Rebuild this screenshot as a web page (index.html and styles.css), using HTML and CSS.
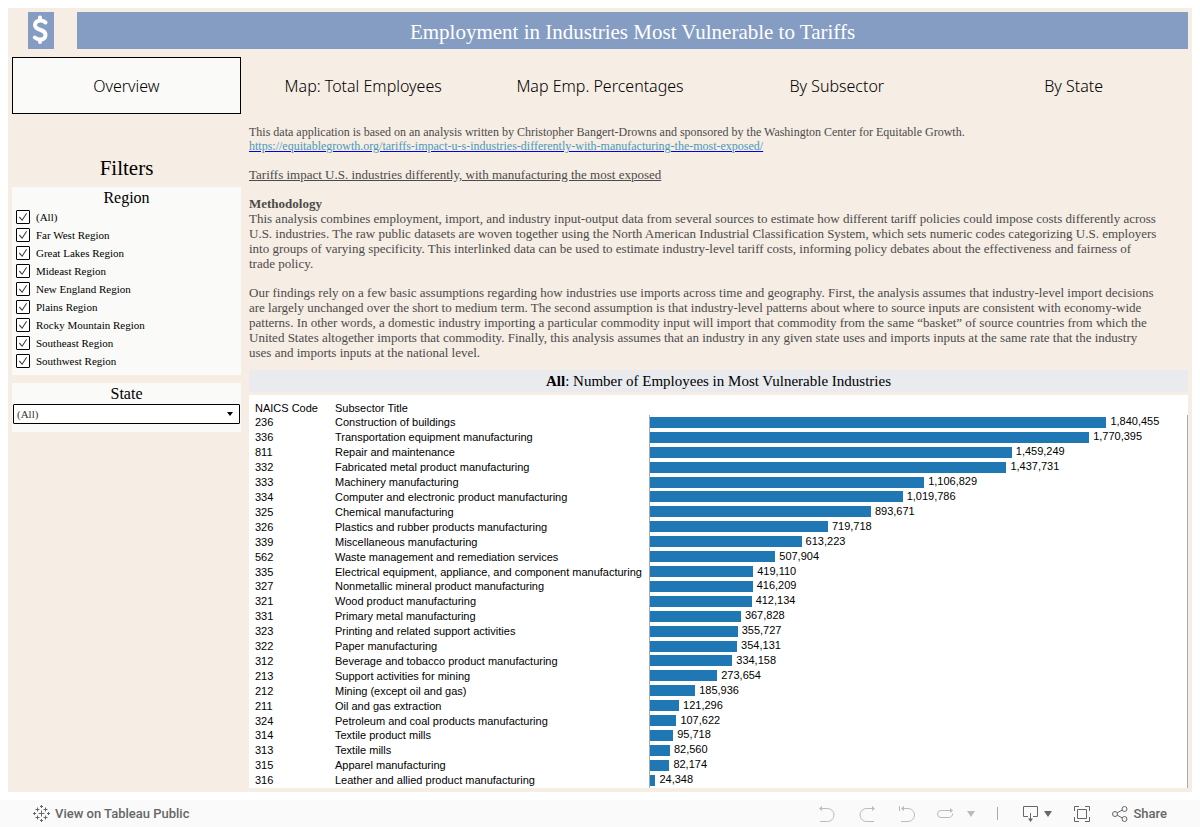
FILE: index.html
```html
<!DOCTYPE html>
<html lang="en">
<head>
    <meta charset="UTF-8">
    <meta name="viewport" content="width=device-width, initial-scale=1.0">
    <title>Employment in Industries Most Vulnerable to Tariffs</title>
    <link rel="stylesheet" href="styles.css">
</head>
<body>
    <div class="dashboard">
        <header class="header">
            <div class="logo">
                <svg width="26" height="37" viewBox="0 0 26 37" fill="none" stroke="#fff" stroke-width="4" stroke-linecap="round" stroke-linejoin="round">
                    <path d="M17.500 10.500C16 9 14.500 8.500 12.500 8.500C9.500 8.500 7 10 7 13C7 19.500 17.500 16 17.500 23C17.500 26 15.200 27.500 12.300 27.500C9.800 27.500 8 26.500 6.800 25.500M12 5.500V8M12 28V30"/>
                </svg>
            </div>
            <h1>Employment in Industries Most Vulnerable to Tariffs</h1>
        </header>

        <nav class="tabs">
            <button class="active">Overview</button>
            <button>Map: Total Employees</button>
            <button>Map Emp. Percentages</button>
            <button>By Subsector</button>
            <button>By State</button>
        </nav>

        <div class="content">
            <aside class="sidebar">
                <h2>Filters</h2>
                <div class="card region">
                    <h3>Region</h3>
                    <label><input type="checkbox" checked>(All)</label>
                    <label><input type="checkbox" checked>Far West Region</label>
                    <label><input type="checkbox" checked>Great Lakes Region</label>
                    <label><input type="checkbox" checked>Mideast Region</label>
                    <label><input type="checkbox" checked>New England Region</label>
                    <label><input type="checkbox" checked>Plains Region</label>
                    <label><input type="checkbox" checked>Rocky Mountain Region</label>
                    <label><input type="checkbox" checked>Southeast Region</label>
                    <label><input type="checkbox" checked>Southwest Region</label>
                </div>
                <div class="card state">
                    <h3><label for="stateSelect">State</label></h3>
                    <select id="stateSelect">
                        <option>(All)</option>
                    </select>
                </div>
            </aside>

            <main class="main">
                <div class="intro">
                    <p class="source">This data application is based on an analysis written by Christopher Bangert-Drowns and sponsored by the Washington Center for Equitable Growth.<br>
                    <a href="https://equitablegrowth.org/tariffs-impact-u-s-industries-differently-with-manufacturing-the-most-exposed/">https://equitablegrowth.org/tariffs-impact-u-s-industries-differently-with-manufacturing-the-most-exposed/</a></p>
                    <p><u>Tariffs impact U.S. industries differently, with manufacturing the most exposed</u></p>
                    <p><strong>Methodology</strong><br>
                    This analysis combines employment, import, and industry input-output data from several sources to estimate how different tariff policies could impose costs differently across<br>
                    U.S. industries. The raw public datasets are woven together using the North American Industrial Classification System, which sets numeric codes categorizing U.S. employers<br>
                    into groups of varying specificity. This interlinked data can be used to estimate industry-level tariff costs, informing policy debates about the effectiveness and fairness of<br>
                    trade policy.</p>
                    <p>Our findings rely on a few basic assumptions regarding how industries use imports across time and geography. First, the analysis assumes that industry-level import decisions<br>
                    are largely unchanged over the short to medium term. The second assumption is that industry-level patterns about where to source inputs are consistent with economy-wide<br>
                    patterns. In other words, a domestic industry importing a particular commodity input will import that commodity from the same “basket” of source countries from which the<br>
                    United States altogether imports that commodity. Finally, this analysis assumes that an industry in any given state uses and imports inputs at the same rate that the industry<br>
                    uses and imports inputs at the national level.</p>
                </div>

                <h2 class="chart-title"><strong>All</strong>: Number of Employees in Most Vulnerable Industries</h2>
                <table class="chart">
                    <thead>
                        <tr><th class="code">NAICS Code</th><th class="name">Subsector Title</th><th></th></tr>
                    </thead>
                    <tbody>
                        <tr><td>236</td><td>Construction of buildings</td><td><div class="bar-row"><span class="bar" style="width: 85%"></span><span class="value">1,840,455</span></div></td></tr>
                        <tr><td>336</td><td>Transportation equipment manufacturing</td><td><div class="bar-row"><span class="bar" style="width: 81.8%"></span><span class="value">1,770,395</span></div></td></tr>
                        <tr><td>811</td><td>Repair and maintenance</td><td><div class="bar-row"><span class="bar" style="width: 67.4%"></span><span class="value">1,459,249</span></div></td></tr>
                        <tr><td>332</td><td>Fabricated metal product manufacturing</td><td><div class="bar-row"><span class="bar" style="width: 66.4%"></span><span class="value">1,437,731</span></div></td></tr>
                        <tr><td>333</td><td>Machinery manufacturing</td><td><div class="bar-row"><span class="bar" style="width: 51.1%"></span><span class="value">1,106,829</span></div></td></tr>
                        <tr><td>334</td><td>Computer and electronic product manufacturing</td><td><div class="bar-row"><span class="bar" style="width: 47.1%"></span><span class="value">1,019,786</span></div></td></tr>
                        <tr><td>325</td><td>Chemical manufacturing</td><td><div class="bar-row"><span class="bar" style="width: 41.2%"></span><span class="value">893,671</span></div></td></tr>
                        <tr><td>326</td><td>Plastics and rubber products manufacturing</td><td><div class="bar-row"><span class="bar" style="width: 33.2%"></span><span class="value">719,718</span></div></td></tr>
                        <tr><td>339</td><td>Miscellaneous manufacturing</td><td><div class="bar-row"><span class="bar" style="width: 28.3%"></span><span class="value">613,223</span></div></td></tr>
                        <tr><td>562</td><td>Waste management and remediation services</td><td><div class="bar-row"><span class="bar" style="width: 23.4%"></span><span class="value">507,904</span></div></td></tr>
                        <tr><td>335</td><td>Electrical equipment, appliance, and component manufacturing</td><td><div class="bar-row"><span class="bar" style="width: 19.3%"></span><span class="value">419,110</span></div></td></tr>
                        <tr><td>327</td><td>Nonmetallic mineral product manufacturing</td><td><div class="bar-row"><span class="bar" style="width: 19.2%"></span><span class="value">416,209</span></div></td></tr>
                        <tr><td>321</td><td>Wood product manufacturing</td><td><div class="bar-row"><span class="bar" style="width: 19%"></span><span class="value">412,134</span></div></td></tr>
                        <tr><td>331</td><td>Primary metal manufacturing</td><td><div class="bar-row"><span class="bar" style="width: 17%"></span><span class="value">367,828</span></div></td></tr>
                        <tr><td>323</td><td>Printing and related support activities</td><td><div class="bar-row"><span class="bar" style="width: 16.4%"></span><span class="value">355,727</span></div></td></tr>
                        <tr><td>322</td><td>Paper manufacturing</td><td><div class="bar-row"><span class="bar" style="width: 16.3%"></span><span class="value">354,131</span></div></td></tr>
                        <tr><td>312</td><td>Beverage and tobacco product manufacturing</td><td><div class="bar-row"><span class="bar" style="width: 15.4%"></span><span class="value">334,158</span></div></td></tr>
                        <tr><td>213</td><td>Support activities for mining</td><td><div class="bar-row"><span class="bar" style="width: 12.6%"></span><span class="value">273,654</span></div></td></tr>
                        <tr><td>212</td><td>Mining (except oil and gas)</td><td><div class="bar-row"><span class="bar" style="width: 8.5%"></span><span class="value">185,936</span></div></td></tr>
                        <tr><td>211</td><td>Oil and gas extraction</td><td><div class="bar-row"><span class="bar" style="width: 5.5%"></span><span class="value">121,296</span></div></td></tr>
                        <tr><td>324</td><td>Petroleum and coal products manufacturing</td><td><div class="bar-row"><span class="bar" style="width: 5%"></span><span class="value">107,622</span></div></td></tr>
                        <tr><td>314</td><td>Textile product mills</td><td><div class="bar-row"><span class="bar" style="width: 4.4%"></span><span class="value">95,718</span></div></td></tr>
                        <tr><td>313</td><td>Textile mills</td><td><div class="bar-row"><span class="bar" style="width: 3.8%"></span><span class="value">82,560</span></div></td></tr>
                        <tr><td>315</td><td>Apparel manufacturing</td><td><div class="bar-row"><span class="bar" style="width: 3.7%"></span><span class="value">82,174</span></div></td></tr>
                        <tr><td>316</td><td>Leather and allied product manufacturing</td><td><div class="bar-row"><span class="bar" style="width: 1.1%"></span><span class="value">24,348</span></div></td></tr>
                    </tbody>
                </table>
            </main>
        </div>
    </div>

    <footer class="toolbar">
        <a class="view-link" href="#">
            <svg width="17" height="17" viewBox="0 0 17 17" fill="none" stroke="#666" stroke-width="1">
                <path d="M8.5 5.5v6M5.5 8.5h6M8.5 0v3M7 1.5h3M8.5 14v3M7 15.5h3M1.5 7v3M0 8.5h3M15.5 7v3M14 8.5h3M4.5 2.5v4M2.5 4.5h4M12.5 2.5v4M10.5 4.5h4M4.5 10.5v4M2.5 12.5h4M12.5 10.5v4M10.5 12.5h4"/>
            </svg>
            View on Tableau Public
        </a>
        <div class="tools">
            <div class="history">
                <button class="off" aria-label="Undo">
                    <svg width="16" height="16" viewBox="0 0 16 16"><path d="M1 2.5h7.5a6.5 6.5 0 0 1 0 13H1"/><path class="fill" d="M0 2.5L3 0v5z"/></svg>
                </button>
                <button class="off" aria-label="Redo">
                    <svg width="16" height="16" viewBox="0 0 16 16"><path d="M15 2.5H7.5a6.5 6.5 0 0 0 0 13H15"/><path class="fill" d="M16 2.5L13 0v5z"/></svg>
                </button>
                <button class="off" aria-label="Revert">
                    <svg width="16" height="16" viewBox="0 0 16 16"><path d="M.5 0v5M3 2.5h6a6.5 6.5 0 0 1 0 13H2"/><path class="fill" d="M2 2.5L5 0v5z"/></svg>
                </button>
            </div>
            <button class="off refresh" aria-label="Refresh">
                <svg width="16" height="16" viewBox="0 0 16 16"><path d="M14 4.5H4a3.500 3.500 0 0 0 0 7h8a3.500 3.500 0 0 0 3.500-4"/><path class="fill" d="M16 4.500L13 2v5z"/></svg>
                <svg width="8" height="6" viewBox="0 0 8 6"><path class="fill" d="M0 0h8L4 6z"/></svg>
            </button>
            <span class="divider"></span>
            <button class="download" aria-label="Download">
                <svg width="16" height="16" viewBox="0 0 16 16"><path d="M5 10.500H.5v-10h14v10H10M7.500 7v7"/><path class="fill" d="M5 12.500h5L7.500 16z"/></svg>
                <svg width="8" height="6" viewBox="0 0 8 6"><path class="fill" d="M0 0h8L4 6z"/></svg>
            </button>
            <button class="full" aria-label="Full screen">
                <svg width="16" height="16" viewBox="0 0 16 16"><path d="M3.500 3.500h9v9h-9zM.5 5V.5H5M11 .5h4.500V5M15.500 11v4.500H11M5 15.500H.5V11"/></svg>
            </button>
            <button class="share">
                <svg width="16" height="16" viewBox="0 0 16 16"><circle cx="3" cy="8" r="2.500"/><circle cx="12.500" cy="3" r="2.500"/><circle cx="12.500" cy="13" r="2.500"/><path d="M5.200 6.800l5-2.700M5.200 9.200l5 2.700"/></svg>
                Share
            </button>
        </div>
    </footer>
</body>
</html>
```
FILE: styles.css
```css
* {
    box-sizing: border-box;
}
body {
    font-family: 'Liberation Serif', 'Times New Roman', serif;
    margin: 0;
    min-height: 100vh;
    display: flex;
    flex-direction: column;
    background: #fff;
    color: #000;
}
h1, h2, h3, p {
    margin: 0;
    font-weight: normal;
}
button {
    font-family: inherit;
    border: none;
    background: none;
    padding: 0;
    cursor: pointer;
}
.dashboard {
    flex: 1;
    display: flex;
    flex-direction: column;
    gap: 8px;
    margin: 8px;
    padding: 4px;
    background: #f6ede4;
}

/* Header */
.header {
    display: flex;
    height: 37px;
}
.logo {
    width: 65px;
    padding-left: 16px;
}
.logo svg {
    display: block;
    background: #859dc2;
}
.header h1 {
    flex: 1;
    background: #859dc2;
    color: #fff;
    font-size: 21px;
    line-height: 40px;
    text-align: center;
}

/* Tabs */
.tabs {
    display: grid;
    grid-template-columns: repeat(5, 1fr);
    gap: 8px;
}
.tabs button {
    height: 57px;
    font-family: 'Noto Sans', 'Open Sans', sans-serif;
    font-size: 16px;
    font-weight: 300;
    color: #000;
}
.tabs .active {
    background: #fafaf8;
    border: 1px solid #000;
}

/* Sidebar */
.content {
    flex: 1;
    display: flex;
    gap: 8px;
}
.sidebar {
    width: 229px;
}
.sidebar h2 {
    padding-top: 34px;
    font-size: 21px;
    line-height: 24px;
    text-align: center;
    margin-bottom: 7px;
}
.card {
    background: #fafaf8;
    margin-bottom: 8px;
}
.card h3 {
    font-size: 16px;
    line-height: 21px;
    text-align: center;
}
.region {
    padding-bottom: 5px;
}
.region label {
    display: flex;
    align-items: center;
    gap: 6px;
    height: 18px;
    padding-left: 4px;
    font-size: 11px;
}
.region input {
    appearance: none;
    width: 14px;
    height: 14px;
    margin: 0;
    border: 1px solid #000;
    border-radius: 1px;
    background: #fff;
    display: grid;
    place-items: center;
}
.region input:checked::before {
    content: "";
    width: 8px;
    height: 8px;
    background: #333;
    clip-path: polygon(0 55%, 10% 45%, 38% 80%, 90% 0, 100% 5%, 40% 100%);
}
.state {
    padding: 0 1px 8px;
}
.state select {
    appearance: none;
    display: block;
    width: 100%;
    height: 20px;
    padding: 0 3px;
    border: 1px solid #000;
    border-radius: 1px;
    font-family: inherit;
    font-size: 11px;
    color: #333;
    background: #fff url("data:image/svg+xml,%3Csvg xmlns='http://www.w3.org/2000/svg' width='6' height='4'%3E%3Cpath d='M0 0h6L3 4z'/%3E%3C/svg%3E") no-repeat right 6px center;
}

/* Text */
.main {
    flex: 1;
    display: flex;
    flex-direction: column;
}
.intro {
    padding: 3px 0 10px;
    font-size: 13px;
    line-height: 15px;
    color: #4b4b4b;
}
.intro p {
    margin-bottom: 14px;
}
.intro p:last-child {
    margin-bottom: 0;
}
.intro .source {
    font-size: 12px;
    line-height: 14px;
}
.source a {
    color: #499ab8;
    text-decoration-color: #0000ee;
}

/* Bar chart */
.chart-title {
    margin-bottom: 3px;
    background: #eaebef;
    font-size: 15px;
    line-height: 22px;
    text-align: center;
}
.chart {
    flex: 1;
    width: 100%;
    table-layout: fixed;
    border-collapse: collapse;
    background: #fff;
    font-family: 'Liberation Sans', Arial, sans-serif;
    font-size: 11px;
    line-height: 14px;
}
.chart th {
    height: 20px;
    padding: 0 0 0 6px;
    font-weight: normal;
    text-align: left;
    vertical-align: bottom;
}
.chart .code {
    width: 80px;
}
.chart .name {
    width: 320px;
}
.chart td {
    padding: 0 0 0 6px;
    white-space: nowrap;
}
.chart td:last-child {
    padding: 0;
    border-left: 1px solid #aaa;
    border-right: 1px solid #aaa;
}
.bar-row {
    display: flex;
    align-items: center;
}
.bar {
    height: 11px;
    background: #1f77b4;
}
.value {
    margin-left: 4px;
    padding-bottom: 2px;
    line-height: 12px;
}

/* Bottom toolbar */
.toolbar {
    display: flex;
    justify-content: space-between;
    align-items: center;
    height: 27px;
    padding: 0 33px;
    background: #fafafa;
    font-family: Roboto, sans-serif;
    font-size: 13px;
    font-weight: 500;
    color: #666;
}
.view-link {
    display: flex;
    align-items: center;
    gap: 5px;
    color: #666;
    text-decoration: none;
}
.tools {
    display: flex;
    align-items: center;
    gap: 22px;
}
.history {
    display: flex;
    gap: 24px;
}
.tools button {
    display: flex;
    align-items: center;
    gap: 5px;
    font-size: 13px;
    font-weight: 500;
    color: #666;
}
.tools .off {
    color: #bbb;
}
.tools .refresh {
    gap: 14px;
}
.tools svg {
    fill: none;
    stroke: currentColor;
}
.tools .fill {
    fill: currentColor;
    stroke: none;
}
.divider {
    width: 1px;
    height: 13px;
    margin-right: 3px;
    background: #aaa;
}
```
